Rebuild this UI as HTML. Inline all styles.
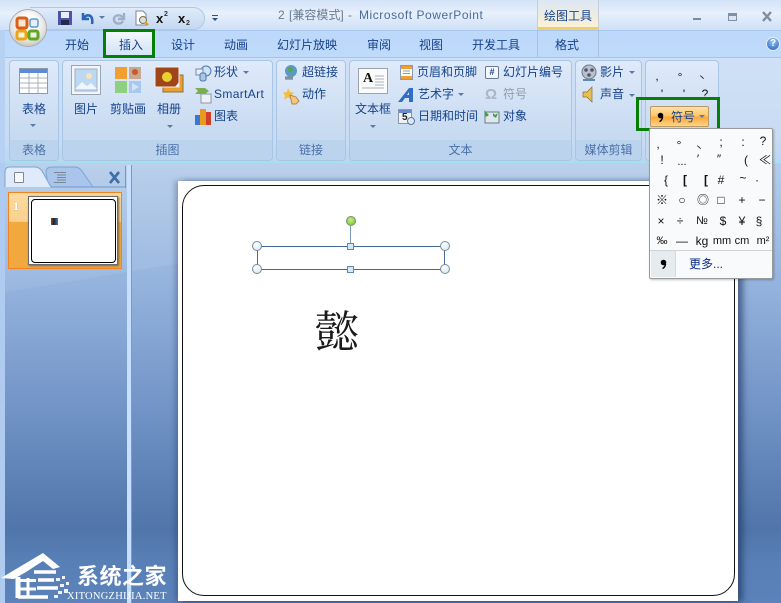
<!DOCTYPE html>
<html lang="zh"><head><meta charset="utf-8"><style>
html,body{margin:0;padding:0}
body{width:781px;height:603px;overflow:hidden;position:relative;background:#5b83ba;font-family:"Liberation Sans","WenQuanYi Zen Hei","Noto Sans CJK SC",sans-serif;font-size:12px;color:#15428b}
div,span{position:absolute;box-sizing:border-box;white-space:nowrap}
svg{position:absolute;overflow:visible}
.t{line-height:14px}
.grp{top:60px;height:101px;border:1px solid #a9c5e4;border-radius:4px;background:linear-gradient(#dfeafa,#c6d9f0 80px)}
.lab{left:0;right:0;bottom:0;height:20px;background:#bcd3ee;text-align:center;line-height:20px;color:#4a70a8;border-radius:0 0 3px 3px}
.tab{top:38px;line-height:14px;color:#15428b}
.s{width:20px;text-align:center;color:#111;line-height:16px;font-size:12px}
.h{width:10px;height:10px;border-radius:50%;background:radial-gradient(circle at 40% 30%,#fff,#cfe6ef);border:1px solid #7c8c9c}
.q{width:7px;height:7px;background:#d6e8f6;border:1px solid #5f87b4}
.ar{width:0;height:0;border-left:3px solid transparent;border-right:3px solid transparent;border-top:3px solid #5a7aa8}
</style></head><body>
<!-- main background -->
<div style="left:0;top:163px;width:781px;height:440px;background:linear-gradient(#b5cdea 0,#95b4de 117px,#7496c8 237px,#5075aa 367px,#5880b6 397px,#5b83ba 440px)"></div>
<div style="left:0;top:163px;width:781px;height:130px;background:rgba(255,255,255,.07);clip-path:polygon(0 0,100% 0,100% 0,0 100%)"></div>
<div style="left:0;top:0;width:781px;height:30px;background:linear-gradient(#d3e3f8,#e7f0fc 45%,#cfe0f6)"></div>
<div style="left:0;top:30px;width:781px;height:28px;background:linear-gradient(#bcd8fa,#bfdafb);border-top:1px solid #a9c7ea"></div>
<div style="left:0;top:57px;width:781px;height:106px;background:linear-gradient(#cfe1f6,#c7dbf3 80%,#bcd6f2);border-top:1px solid #a6c3e4;border-bottom:2px solid #a5e0ee"></div>
<div style="left:0;top:30px;width:5px;height:133px;background:#b7d1f2"></div>

<!-- QAT -->
<div style="left:30px;top:7px;width:175px;height:23px;border:1px solid #b0c8e6;border-left:0;border-radius:0 12px 12px 0;background:linear-gradient(#e0ebfa,#c4d8f2)"></div>
<!-- office button -->
<div style="left:9px;top:9px;width:38px;height:38px;border-radius:50%;background:radial-gradient(circle at 50% 38%,#fdfdfd 30%,#e2e0db 62%,#a5a39e);border:1px solid #a8aeb8"></div>
<svg style="left:15px;top:16px" width="26" height="26"><rect x="2" y="2" width="10" height="10" rx="2" fill="#fbe8d4" stroke="#dc5e14" stroke-width="3"/><rect x="15" y="3" width="8" height="8" rx="2" fill="#e6f0fa" stroke="#5a9ad8" stroke-width="1.500"/><rect x="2" y="15" width="9" height="8" rx="2" fill="#fdf4d8" stroke="#eca41c" stroke-width="3"/><rect x="14" y="15" width="9" height="8" rx="2" fill="#e8f4d8" stroke="#62a428" stroke-width="3"/></svg>
<!-- save -->
<svg style="left:58px;top:11px" width="14" height="14"><rect width="14" height="14" fill="#4a55a8"/><rect x="3" y="1" width="8" height="6" fill="#e8ecf8"/><rect x="3" y="9" width="8" height="5" fill="#23284e"/></svg>
<svg style="left:81px;top:11px" width="14" height="14"><path d="M2 2v6h6M2 8C5 2 13 3 11 13" fill="none" stroke="#2a66b8" stroke-width="2.600"/></svg>
<div class="ar" style="left:99px;top:16px"></div>
<svg style="left:112px;top:11px" width="14" height="14"><path d="M12 2v6H6M12 8C9 2 1 4 2 9c.7 4 7 5 9 1" fill="none" stroke="#9fb0c6" stroke-width="2.400"/></svg>
<svg style="left:134px;top:10px" width="16" height="16"><path d="M2 1h7l3 3v11H2z" fill="#fff" stroke="#7b8794"/><circle cx="9" cy="10" r="3.500" fill="#cfe3ee" stroke="#8a6a30"/><path d="M11 12l3 3" stroke="#d89a2c" stroke-width="2"/></svg>
<div style="left:156px;top:11px;font:bold 13px/16px 'Liberation Sans';color:#111">x</div><div style="left:164px;top:10px;font:bold 7px/9px 'Liberation Sans';color:#333">2</div>
<div style="left:178px;top:11px;font:bold 13px/16px 'Liberation Sans';color:#111">x</div><div style="left:186px;top:19px;font:bold 7px/9px 'Liberation Sans';color:#333">2</div>
<div style="left:212px;top:15px;width:6px;height:1px;background:#33507a"></div><div class="ar" style="left:212px;top:18px;border-top-color:#33507a"></div>
<!-- title -->
<div class="t" style="left:278px;top:8px;color:#6a7a90;word-spacing:1px">2 [兼容模式] -</div>
<div class="t" style="left:359px;top:8px;color:#4a6a9a;letter-spacing:.55px">Microsoft PowerPoint</div>
<!-- contextual tab -->
<div style="left:537px;top:0;width:62px;height:30px;background:linear-gradient(#dce7f5,#fbf1d4);border-bottom:3px solid #f2cd6d;border-left:1px solid #c6cfd8;border-right:1px solid #c6cfd8"></div>
<div class="t" style="left:544px;top:9px;color:#15428b">绘图工具</div>
<div style="left:537px;top:30px;width:1px;height:27px;background:#a8c2e0"></div>
<div style="left:598px;top:30px;width:1px;height:27px;background:#a8c2e0"></div>
<!-- window buttons -->
<div style="left:693px;top:18px;width:8px;height:2px;background:#7a8ba0"></div>
<div style="left:728px;top:13px;width:9px;height:8px;border:1px solid #7d90a8;border-top:3px solid #7d90a8;background:#dbe6f4"></div>
<svg style="left:762px;top:12px" width="10" height="9"><path d="M1 0l8 9M9 0L1 9" stroke="#7c8da4" stroke-width="2.400"/></svg>
<div style="left:766px;top:37px;width:14px;height:14px;border-radius:50%;background:radial-gradient(circle at 50% 30%,#9cc4f0,#1f5fc0);border:1px solid #e5eefa;color:#fff;font:bold 10px/12px 'Liberation Sans';text-align:center">?</div>
<!-- tabs -->
<div class="tab" style="left:65px">开始</div>
<div style="left:106px;top:31px;width:47px;height:27px;background:linear-gradient(#f4f8fe,#cfe0f5)"></div>
<div class="tab" style="left:119px">插入</div>
<div class="tab" style="left:171px">设计</div>
<div class="tab" style="left:224px">动画</div>
<div class="tab" style="left:277px">幻灯片放映</div>
<div class="tab" style="left:367px">审阅</div>
<div class="tab" style="left:419px">视图</div>
<div class="tab" style="left:472px">开发工具</div>
<div class="tab" style="left:555px">格式</div>

<!-- groups -->
<div class="grp" style="left:9px;width:50px"><div class="lab">表格</div></div>
<div class="grp" style="left:62px;width:211px"><div class="lab">插图</div></div>
<div class="grp" style="left:276px;width:70px"><div class="lab">链接</div></div>
<div class="grp" style="left:349px;width:223px"><div class="lab">文本</div></div>
<div class="grp" style="left:575px;width:67px"><div class="lab">媒体剪辑</div></div>
<div class="grp" style="left:645px;width:74px"></div>

<!-- table group -->
<svg style="left:19px;top:68px" width="29" height="26"><rect x=".5" y=".5" width="28" height="25" fill="#fff" stroke="#8f9aa8"/><rect x="1" y="1" width="27" height="4" fill="#5b8ad8"/><path d="M10 5v20M19 5v20M1 10h27M1 15h27M1 20h27" stroke="#a8b2bf"/></svg>
<div class="t" style="left:22px;top:102px">表格</div><div class="ar" style="left:30px;top:124px"></div>
<!-- picture -->
<svg style="left:71px;top:65px" width="30" height="30"><rect x=".5" y=".5" width="29" height="29" fill="#f3f5f8" stroke="#9aa6b4"/><rect x="4" y="4" width="22" height="22" fill="#bcd8f2" stroke="#9ab2cc"/><circle cx="18" cy="11" r="3" fill="#fbe3b8"/><path d="M4 24l7-7 5 4 4-3 6 6z" fill="#eef5fb"/></svg>
<div class="t" style="left:74px;top:102px">图片</div>
<svg style="left:115px;top:67px" width="27" height="27"><rect width="12" height="12" fill="#f0a030"/><rect x="14" width="12" height="12" fill="#c8a890"/><rect y="14" width="12" height="12" fill="#8fd080"/><rect x="14" y="14" width="12" height="12" fill="#a8c8ee"/><circle cx="20" cy="5" r="3" fill="#c85a30"/><path d="M17 16l7 4-7 4z" fill="#d4e4f8"/></svg>
<div class="t" style="left:110px;top:102px">剪贴画</div>
<svg style="left:155px;top:67px" width="30" height="26"><rect x="8" y="8" width="20" height="17" fill="#e8a030" stroke="#8a7040"/><rect width="24" height="20" fill="#a0451a" stroke="#efefef"/><circle cx="12" cy="10" r="5" fill="#e8d030"/><path d="M20 20l4-5v5z" fill="#eee"/></svg>
<div class="t" style="left:157px;top:102px">相册</div><div class="ar" style="left:167px;top:125px"></div>
<svg style="left:195px;top:65px" width="17" height="16"><circle cx="11" cy="6" r="5" fill="#cfe2f6" stroke="#4a78a8"/><rect x="1" y="4" width="7" height="6" fill="#e8f0fa" stroke="#6a8ab0"/><rect x="5" y="8" width="6" height="8" rx="2" fill="#a8c6e6" stroke="#4a78a8"/></svg>
<div class="t" style="left:214px;top:65px">形状</div><div class="ar" style="left:243px;top:71px"></div>
<svg style="left:195px;top:87px" width="17" height="16"><path d="M0 1h10l4 3-4 3H0l3-3z" fill="#78b050"/><rect x="6" y="7" width="10" height="9" fill="#eef2f6" stroke="#8a98a8"/></svg>
<div class="t" style="left:214px;top:87px;letter-spacing:.35px;font-size:12px">SmartArt</div>
<svg style="left:195px;top:109px" width="17" height="16"><rect y="6" width="5" height="10" fill="#3a78d0"/><rect x="5" width="6" height="16" fill="#e89a20"/><rect x="11" y="3" width="5" height="13" fill="#d04028"/></svg>
<div class="t" style="left:214px;top:109px">图表</div>
<!-- link -->
<svg style="left:283px;top:65px" width="16" height="17"><circle cx="8" cy="6" r="6" fill="#5a9ac8"/><path d="M5 3l4-1 1 4-4 2z" fill="#5aa848"/><path d="M2 13h8" stroke="#8090a0" stroke-width="3.400"/></svg>
<div class="t" style="left:302px;top:65px">超链接</div>
<svg style="left:283px;top:87px" width="17" height="17"><path d="M5 1l2 4 4 .5-3 3 1 4-4-2-4 2 1-4-2-3 4-.5z" fill="#f2c040"/><path d="M7 8l6 2 3 4-3 3H9z" fill="#f2c878" stroke="#b8864a"/></svg>
<div class="t" style="left:302px;top:87px">动作</div>
<!-- text group -->
<svg style="left:358px;top:68px" width="30" height="26"><rect x=".5" y=".5" width="29" height="25" fill="#fbfbfb" stroke="#9aa4b0"/><path d="M17 8h9M17 11h9M17 14h9M17 17h9M4 20h22" stroke="#a8b2bf"/></svg>
<div style="left:363px;top:70px;font:bold 14px/18px 'Liberation Serif';color:#111">A</div>
<div class="t" style="left:355px;top:102px">文本框</div><div class="ar" style="left:370px;top:125px"></div>
<svg style="left:400px;top:65px" width="13" height="15"><rect x=".5" y=".5" width="12" height="14" fill="#fff" stroke="#8a9ab0"/><rect x="1" y="1" width="11" height="3" fill="#f0a030"/><rect x="1" y="11" width="11" height="3" fill="#f0a030"/><path d="M3 6h7M3 8.500h7" stroke="#99a"/></svg>
<div class="t" style="left:417px;top:65px">页眉和页脚</div>
<svg style="left:398px;top:87px" width="16" height="16"><path d="M0 15L11 1h4v14h-4v-4H7l-3 4z" fill="#2f6ec4"/><path d="M9 8l2-3v3z" fill="#cfe2f6"/></svg>
<div class="t" style="left:418px;top:87px">艺术字</div><div class="ar" style="left:458px;top:93px"></div>
<svg style="left:398px;top:109px" width="17" height="16"><rect x=".5" y=".5" width="13" height="14" fill="#eef2f6" stroke="#8a98a8"/><rect x="1" y="1" width="12" height="3" fill="#6a8ad0"/><circle cx="13" cy="12" r="3.500" fill="#dce8f6" stroke="#607890"/></svg>
<div style="left:402px;top:112px;font:bold 10px/11px 'Liberation Sans';color:#222">5</div>
<div class="t" style="left:418px;top:109px">日期和时间</div>
<div style="left:485px;top:66px;width:14px;height:13px;background:#f4f6fa;border:1px solid #6a7a90;border-radius:2px;font:bold 9px/11px 'Liberation Sans';color:#15428b;text-align:center">#</div>
<div class="t" style="left:503px;top:65px">幻灯片编号</div>
<div style="left:485px;top:86px;font:bold 15px/18px 'Liberation Sans','DejaVu Sans';color:#a9b6c6">Ω</div>
<div class="t" style="left:503px;top:87px;color:#8e9caf">符号</div>
<svg style="left:484px;top:109px" width="16" height="15"><rect x="1" y="3" width="14" height="11" fill="#dfe6ee" stroke="#6a7a8a"/><path d="M0 1l5 5-3 2zM9 4l2 2 3-2-2 5-3-2z" fill="#40a040"/></svg>
<div class="t" style="left:503px;top:109px">对象</div>
<!-- media -->
<svg style="left:581px;top:65px" width="17" height="17"><circle cx="8" cy="7" r="7" fill="#b8c0cc" stroke="#6a7a8a"/><circle cx="5" cy="5" r="1.800" fill="#556"/><circle cx="11" cy="5" r="1.800" fill="#556"/><circle cx="8" cy="10" r="1.800" fill="#556"/><path d="M2 15h12" stroke="#5a8ab8" stroke-width="2"/></svg>
<div class="t" style="left:600px;top:65px">影片</div><div class="ar" style="left:629px;top:71px"></div>
<svg style="left:583px;top:87px" width="14" height="15"><path d="M0 5h4l5-5v15l-5-5H0z" fill="#e8c050" stroke="#8a7030" stroke-width=".7"/></svg>
<div class="t" style="left:600px;top:87px">声音</div><div class="ar" style="left:629px;top:94px"></div>
<!-- symbols in ribbon -->
<div class="s" style="left:647px;top:68px">,</div><div class="s" style="left:670px;top:69px">°</div><div class="s" style="left:692px;top:70px;font-size:9px">丶</div>
<div class="s" style="left:652px;top:86px">'</div><div class="s" style="left:674px;top:86px">'</div><div class="s" style="left:695px;top:86px">?</div>

<!-- symbol button -->
<div style="left:650px;top:106px;width:59px;height:21px;background:linear-gradient(#fde0a8,#fdc869 45%,#fba93c 55%,#fdd488);border:1px solid #b99a62;border-radius:2px"></div>
<svg style="left:657px;top:112px" width="7" height="10"><circle cx="3.500" cy="3.500" r="2.800" fill="#000"/><path d="M5.500 5C5.500 7 4 9 2.500 9.500" stroke="#000" stroke-width="1.400" fill="none"/></svg>
<div class="t" style="left:671px;top:110px">符号</div>
<div class="ar" style="left:699px;top:115px;border-top-color:#5a7aa8"></div>
<!-- green highlights -->
<div style="left:103px;top:29px;width:52px;height:29px;border:3px solid #057f05"></div>
<div style="left:636px;top:97px;width:84px;height:34px;border:3px solid #057f05"></div>

<!-- left side -->
<div style="left:0;top:163px;width:5px;height:440px;background:#afcbef"></div>
<div style="left:127px;top:165px;width:4px;height:438px;background:#c8e0ff"></div>
<div style="left:131px;top:165px;width:1px;height:438px;background:#6f9bd8"></div>
<div style="left:125px;top:166px;width:1px;height:22px;background:#6f98cc"></div>
<svg style="left:0;top:160px" width="130" height="30">
<path d="M48 27L46 12Q46 7 52 7H75Q79 7 82 11L93 27" fill="#a9c5ec" stroke="#7fa4d2"/>
<path d="M5 27V12Q5 7 10 7H35Q39 7 42 11L51 27" fill="#dfeafb" stroke="#7fa4d2"/>
<path d="M51 27H126" stroke="#6f98cc"/>
</svg>
<div style="left:14px;top:172px;width:10px;height:11px;background:#f6f8fb;border:1px solid #7d8a9a;border-radius:1px"></div>
<svg style="left:54px;top:172px" width="12" height="11"><path d="M0 .5h12M3 3h9M3 5.500h9M3 8h9M0 10.500h12" stroke="#7c8794"/></svg>
<svg style="left:109px;top:172px" width="11" height="11"><path d="M1 0l9 11M10 0L1 11" stroke="#3f6fa5" stroke-width="2.600"/></svg>
<!-- thumb -->
<div style="left:8px;top:192px;width:114px;height:77px;background:linear-gradient(#fbdca0,#fad08e 38%,#f1a83e 39%,#f1a83e);border:1px solid #f5811f"></div>
<div style="left:13px;top:200px;color:#fff;font:bold 12px/13px 'Liberation Serif';text-shadow:0 0 1px #b88a4a">1</div>
<div style="left:28px;top:196px;width:90px;height:69px;background:#fff;border:1px solid #6a6a6a;box-shadow:1px 1px 2px #7a6a4a"></div>
<div style="left:31px;top:199px;width:85px;height:64px;background:#fff;border:1px solid #000;border-radius:4px"></div>
<div style="left:51px;top:218px;width:7px;height:7px;background:linear-gradient(90deg,#a04040,#222 40%,#3a78d0)"></div>

<!-- slide -->
<div style="left:178px;top:181px;width:560px;height:420px;background:#fff;box-shadow:5px 1px 6px rgba(30,50,90,.6),-3px 0 5px rgba(30,50,90,.3)"></div>
<div style="left:182px;top:185px;width:553px;height:411px;border:1.500px solid #111;border-radius:22px"></div>
<!-- selection -->
<div style="left:257px;top:246px;width:188px;height:24px;border:1px solid #44699a"></div>
<div style="left:350px;top:226px;width:1px;height:20px;background:#7d9abb"></div>
<div style="left:346px;top:216px;width:10px;height:10px;border-radius:50%;background:radial-gradient(circle at 45% 35%,#c6f080,#6cc020);border:1px solid #7c8c80"></div>
<div class="h" style="left:252px;top:241px"></div><div class="h" style="left:440px;top:241px"></div>
<div class="h" style="left:252px;top:264px"></div><div class="h" style="left:440px;top:264px"></div>
<div class="q" style="left:347px;top:243px"></div><div class="q" style="left:347px;top:266px"></div>
<div style="left:315px;top:303px;font:44px/50px 'Noto Serif CJK SC',serif;color:#1a1a1a">懿</div>

<!-- dropdown -->
<div style="left:649px;top:128px;width:124px;height:151px;background:#f9fafb;border:1px solid #9a9a9a;border-radius:2px;box-shadow:1px 1px 2px rgba(0,0,0,.25)"></div>
<div class="s" style="left:648px;top:136px">,</div><div class="s" style="left:669px;top:137px">°</div><div class="s" style="left:689px;top:140px;font-size:9px">丶</div><div class="s" style="left:711px;top:134px">;</div><div class="s" style="left:733px;top:134px">:</div><div class="s" style="left:753px;top:133px">?</div>
<div class="s" style="left:652px;top:152px">!</div><div class="s" style="left:672px;top:154px;font-size:11px">...</div><div class="s" style="left:688px;top:151px">′</div><div class="s" style="left:709px;top:151px">″</div><div class="s" style="left:736px;top:152px">(</div><div class="s" style="left:755px;top:152px">≪</div>
<div class="s" style="left:656px;top:172px">{</div><div class="s" style="left:675px;top:172px;font-weight:bold">[</div><div class="s" style="left:696px;top:172px;font-weight:bold">[</div><div class="s" style="left:711px;top:172px">#</div><div class="s" style="left:733px;top:170px">~</div><div class="s" style="left:747px;top:172px">·</div>
<div class="s" style="left:652px;top:192px">※</div><div class="s" style="left:672px;top:192px">○</div><div class="s" style="left:693px;top:192px">◎</div><div class="s" style="left:711px;top:192px">□</div><div class="s" style="left:732px;top:192px">+</div><div class="s" style="left:752px;top:192px">−</div>
<div class="s" style="left:651px;top:213px">×</div><div class="s" style="left:670px;top:213px">÷</div><div class="s" style="left:692px;top:213px;font-size:11px">№</div><div class="s" style="left:713px;top:213px">$</div><div class="s" style="left:732px;top:213px">¥</div><div class="s" style="left:749px;top:213px">§</div>
<div class="s" style="left:652px;top:233px;font-size:11px">‰</div><div class="s" style="left:672px;top:233px">—</div><div class="s" style="left:692px;top:233px">kg</div><div class="s" style="left:712px;top:233px;font-size:11px">mm</div><div class="s" style="left:732px;top:233px;font-size:11px">cm</div><div class="s" style="left:753px;top:233px;font-size:11px">m²</div>
<div style="left:650px;top:250px;width:122px;height:1px;background:#cfd3d6"></div>
<div style="left:651px;top:251px;width:25px;height:26px;background:#e6ecee;border-right:1px solid #d6dadc"></div>
<svg style="left:660px;top:259px" width="7" height="10"><circle cx="3.500" cy="3.500" r="2.800" fill="#000"/><path d="M5.500 5C5.500 7 4 9 2.500 9.500" stroke="#000" stroke-width="1.400" fill="none"/></svg>
<div class="t" style="left:689px;top:257px;color:#0a2a8b">更多...</div>

<!-- watermark -->
<svg style="left:0;top:552px" width="78" height="50">
<path d="M1 26L43 1L60 15L53 17L43 9L26 20L14 27z" fill="#fff"/>
<path d="M18 25V46" stroke="#fff" stroke-width="5"/>
<path d="M20 28.500H36M20 37H36M28 26V45" stroke="#fff" stroke-width="3"/>
<path d="M34 20H56M38 28H54M37 36H58M18 45H48" stroke="#fff" stroke-width="3.500"/>
<path d="M56 26h4v3h-4zM62 24h3v3h-3zM66 30h3v3h-3zM60 32h4v3h-4zM64 37h4v4h-4zM58 39h4v3h-4zM54 43h4v3h-4z" fill="#fff" opacity=".9"/>
</svg>
<div style="left:77px;top:562px;font:bold 22px/27px 'Noto Sans CJK SC',sans-serif;color:#fff;letter-spacing:.5px">系统之家</div>
<div style="left:67px;top:591px;font:10.500px/12px 'Liberation Serif',serif;color:#fff;letter-spacing:.25px">XITONGZHIJIA.NET</div>
</body></html>
